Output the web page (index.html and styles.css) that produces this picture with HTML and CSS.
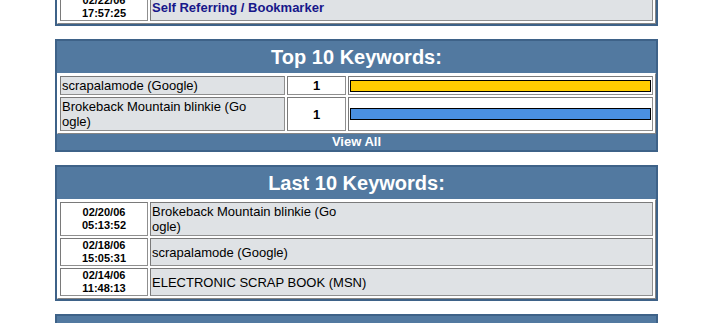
FILE: index.html
```html
<!DOCTYPE html>
<html lang="en">
<head>
    <meta charset="UTF-8">
    <title>Site Stats</title>
    <link rel="stylesheet" href="styles.css">
</head>
<body>
    <div class="stats">
        <div class="panel">
            <table class="list">
                <tr>
                    <td class="date-cell">02/22/06<br>17:57:25</td>
                    <td class="text-cell"><a class="ref-link" href="#">Self Referring / Bookmarker</a></td>
                </tr>
            </table>
        </div>

        <div class="panel">
            <h2 class="panel-title">Top 10 Keywords:</h2>
            <table class="list">
                <tr>
                    <td class="text-cell kw-cell">scrapalamode (Google)</td>
                    <td class="count-cell">1</td>
                    <td class="bar-cell"><div class="bar bar-yellow" style="width: 100%"></div></td>
                </tr>
                <tr>
                    <td class="text-cell kw-cell">Brokeback Mountain blinkie (Go<br>ogle)</td>
                    <td class="count-cell">1</td>
                    <td class="bar-cell"><div class="bar bar-blue" style="width: 100%"></div></td>
                </tr>
            </table>
            <a class="view-all" href="#">View All</a>
        </div>

        <div class="panel">
            <h2 class="panel-title">Last 10 Keywords:</h2>
            <table class="list">
                <tr>
                    <td class="date-cell">02/20/06<br>05:13:52</td>
                    <td class="text-cell">Brokeback Mountain blinkie (Go<br>ogle)</td>
                </tr>
                <tr>
                    <td class="date-cell">02/18/06<br>15:05:31</td>
                    <td class="text-cell">scrapalamode (Google)</td>
                </tr>
                <tr>
                    <td class="date-cell">02/14/06<br>11:48:13</td>
                    <td class="text-cell">ELECTRONIC SCRAP BOOK (MSN)</td>
                </tr>
            </table>
        </div>

        <div class="panel">
            <h2 class="panel-title">Top 10 Search Engines:</h2>
        </div>
    </div>
</body>
</html>
```

FILE: styles.css
```css
body {
    margin: 0;
    padding: 0;
    background-color: #fff;
    font-family: "Liberation Sans", Arial, sans-serif;
    color: #000;
}

.stats {
    width: 603px;
    margin: -12px 0 0 55px;
}

.panel {
    background-color: #5279a0;
    border: 2px solid #3e6288;
    margin-bottom: 13px;
}

.panel-title {
    margin: 0;
    height: 32px;
    line-height: 32px;
    text-align: center;
    font-size: 20px;
    font-weight: bold;
    color: #fff;
}

.list {
    width: 100%;
    border-spacing: 2px;
    background-color: #fff;
    border: 1px solid;
    border-color: #fff #858585 #858585 #fff;
}

.list td {
    border: 1px solid;
    border-color: #7a7a7a #8f8f8f #8f8f8f #7a7a7a;
    padding: 1px;
    font-size: 13px;
    line-height: 15px;
    vertical-align: middle;
}

.text-cell {
    background-color: #dfe2e5;
}

.kw-cell {
    width: 221px;
}

.count-cell {
    width: 55px;
    text-align: center;
    font-weight: bold;
}

.list td.date-cell {
    width: 86px;
    padding: 0;
    font-size: 11px;
    line-height: 13px;
    font-weight: bold;
    text-align: center;
}

.ref-link {
    color: #17178a;
    font-weight: bold;
    text-decoration: none;
}

.bar {
    height: 12px;
    box-sizing: border-box;
    border: 1px solid #000;
}

.bar-yellow {
    background-color: #ffcc00;
}

.bar-blue {
    background-color: #4a90e2;
}

.view-all {
    display: block;
    height: 16px;
    line-height: 15px;
    text-align: center;
    font-size: 13px;
    font-weight: bold;
    color: #fff;
    text-decoration: none;
}
```
